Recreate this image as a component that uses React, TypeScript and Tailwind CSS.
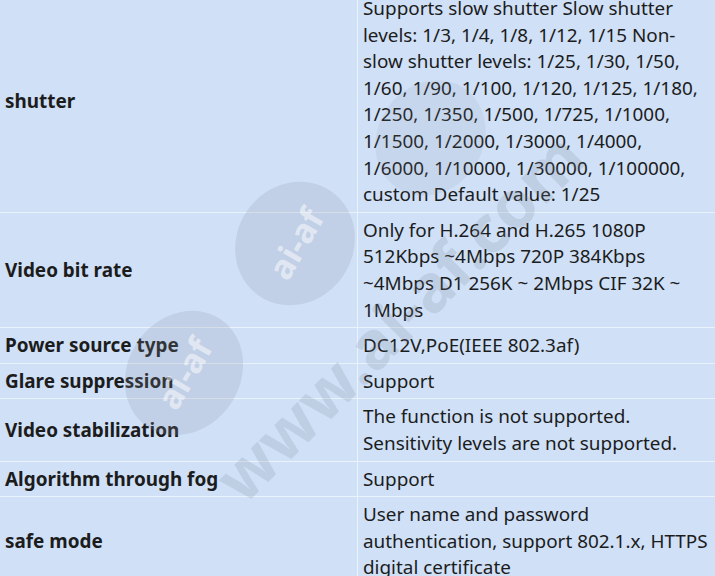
import React from 'react';

type Row = { label: string; lines: string[] };

const rows: Row[] = [
  {
    label: 'shutter',
    lines: [
      'Supports slow shutter Slow shutter',
      'levels: 1/3, 1/4, 1/8, 1/12, 1/15 Non-',
      'slow shutter levels: 1/25, 1/30, 1/50,',
      '1/60, 1/90, 1/100, 1/120, 1/125, 1/180,',
      '1/250, 1/350, 1/500, 1/725, 1/1000,',
      '1/1500, 1/2000, 1/3000, 1/4000,',
      '1/6000, 1/10000, 1/30000, 1/100000,',
      'custom Default value: 1/25',
    ],
  },
  {
    label: 'Video bit rate',
    lines: [
      'Only for H.264 and H.265 1080P',
      '512Kbps ~4Mbps 720P 384Kbps',
      '~4Mbps D1 256K ~ 2Mbps CIF 32K ~',
      '1Mbps',
    ],
  },
  { label: 'Power source type', lines: ['DC12V,PoE(IEEE 802.3af)'] },
  { label: 'Glare suppression', lines: ['Support'] },
  {
    label: 'Video stabilization',
    lines: ['The function is not supported.', 'Sensitivity levels are not supported.'],
  },
  { label: 'Algorithm through fog', lines: ['Support'] },
  {
    label: 'safe mode',
    lines: [
      'User name and password',
      'authentication, support 802.1.x, HTTPS',
      'digital certificate',
    ],
  },
];

function Watermark() {
  return (
    <div className="pointer-events-none absolute inset-0 overflow-hidden">
      {/* round logos */}
      <div className="absolute left-[237px] top-[180px] flex h-[127px] w-[116px] rotate-[35deg] items-center justify-center rounded-[50%] bg-[#8a93a3]/20">
        <span className="-rotate-[95deg] text-[34px] font-bold text-white/50">ai-af</span>
      </div>
      <div className="absolute left-[128px] top-[308px] flex h-[130px] w-[112px] rotate-[35deg] items-center justify-center rounded-[50%] bg-[#8a93a3]/20">
        <span className="-rotate-[95deg] text-[34px] font-bold text-white/50">ai-af</span>
      </div>
      <div className="absolute left-[378px] top-[78px] h-[120px] w-[105px] rotate-[35deg] rounded-[50%] bg-[#8a93a3]/12" />
      {/* site address */}
      <div className="absolute left-[398px] top-[316px] -translate-x-1/2 -translate-y-1/2 -rotate-[45deg] whitespace-nowrap text-[66px] font-bold text-[#7d8797]/20">
        www.ai-af.com
      </div>
    </div>
  );
}

export default function App() {
  return (
    <div className="relative h-[576px] w-[715px] overflow-hidden bg-[#cfe0f7] font-['Noto_Sans','Open_Sans',sans-serif] text-[18.9px] leading-[26.6px] text-[#1c1c1c]">
      <div className="-mt-[9px] flex flex-col">
        {rows.map((row) => (
          <div key={row.label} className="flex border-b border-[#eaf2fc]">
            <div className="flex w-[358px] shrink-0 items-center border-r border-[#eaf2fc] px-[5px] py-[4px] font-bold">
              {row.label}
            </div>
            <div className="flex-1 px-[5px] py-[4px]">
              {row.lines.map((line) => (
                <div key={line} className="whitespace-nowrap">
                  {line}
                </div>
              ))}
            </div>
          </div>
        ))}
      </div>
      <Watermark />
    </div>
  );
}
